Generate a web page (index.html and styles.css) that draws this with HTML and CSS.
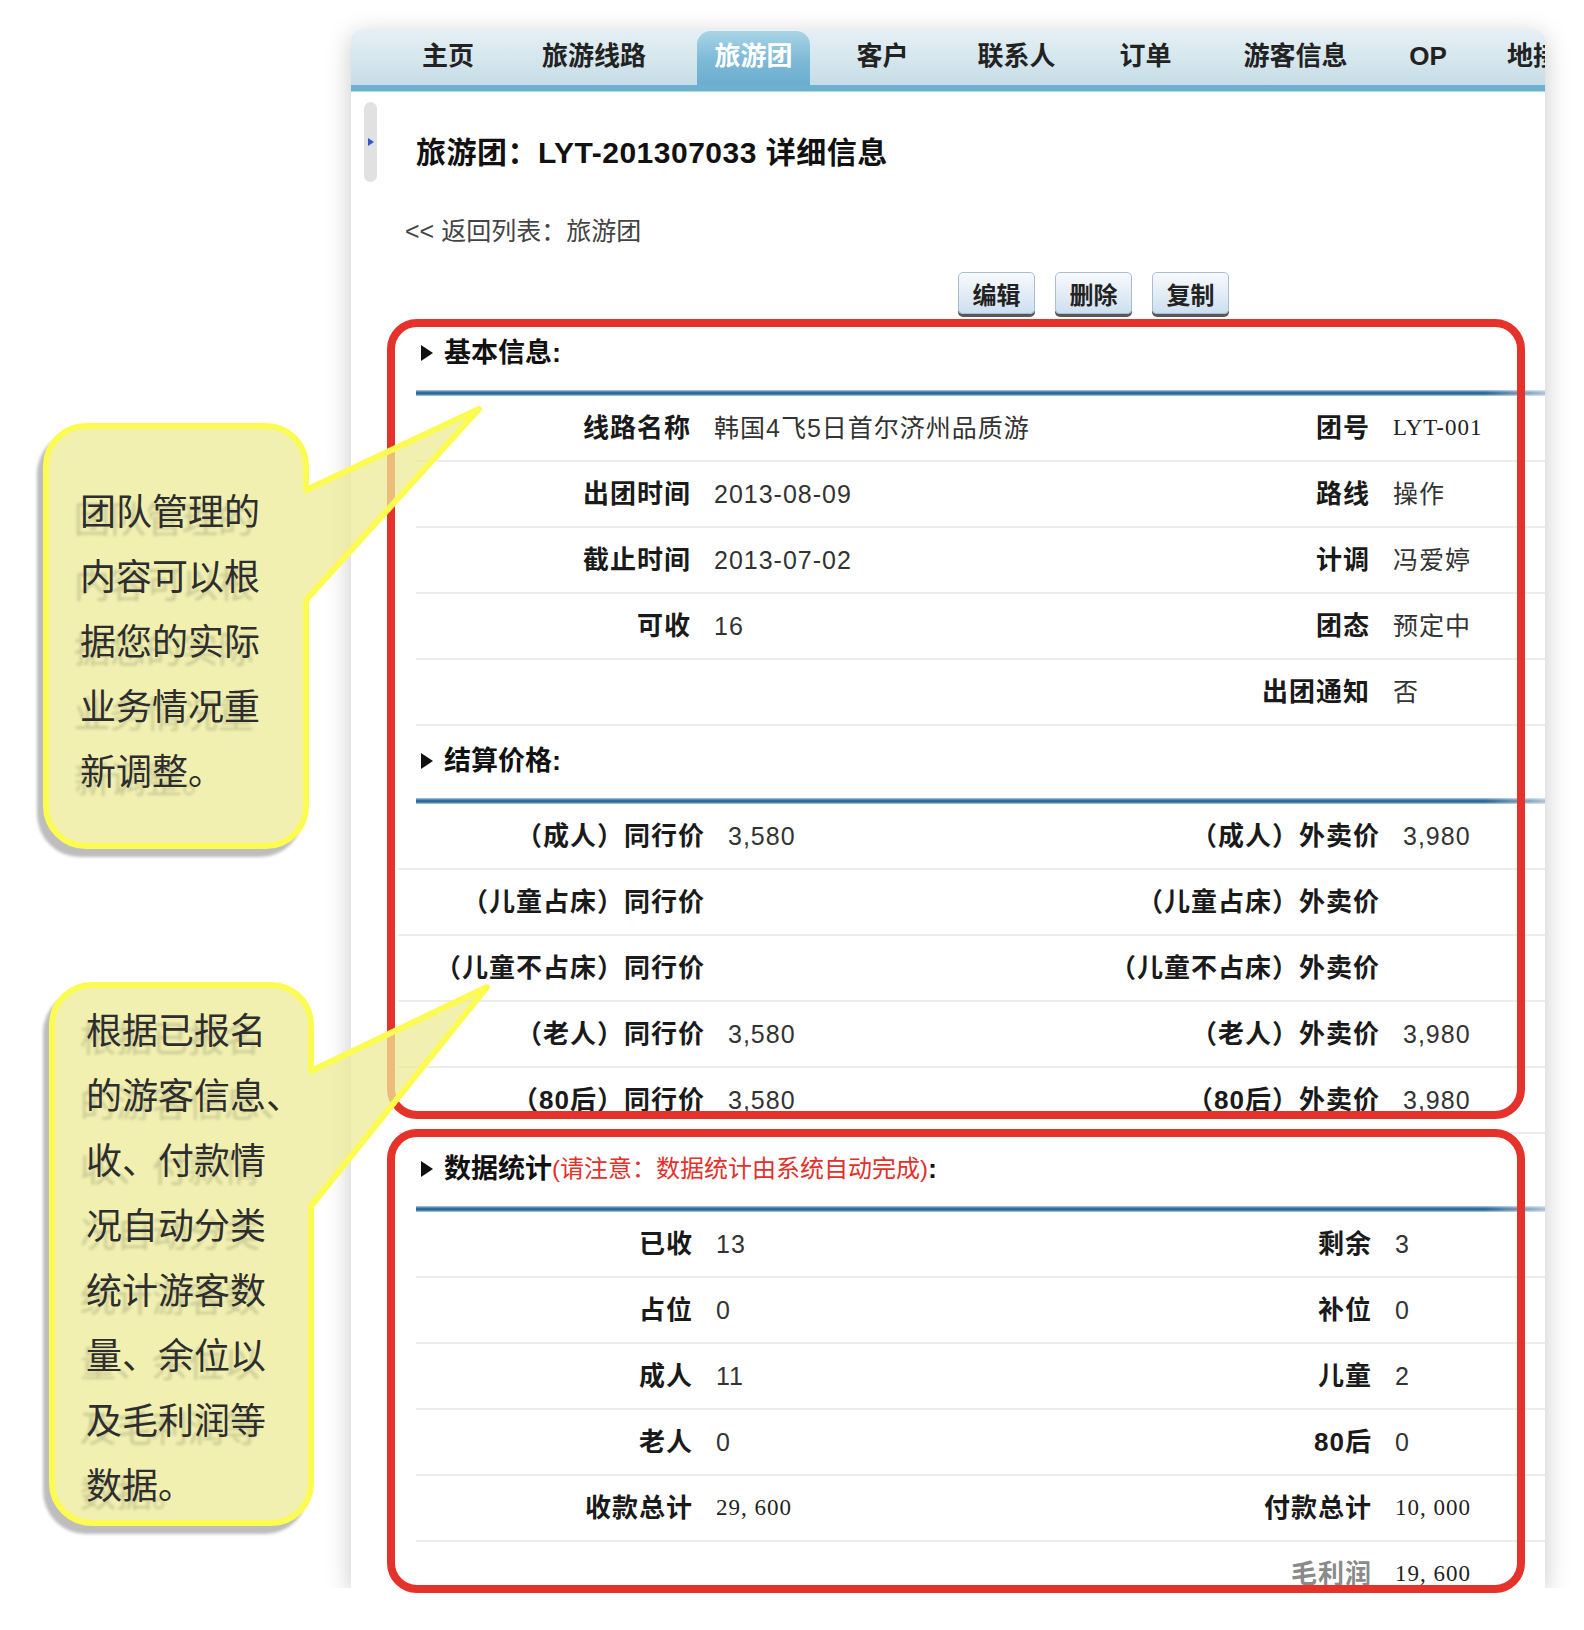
FILE: index.html
```html
<!DOCTYPE html>
<html lang="zh-CN">
<head>
    <meta charset="utf-8">
    <title>旅游团：LYT-201307033 详细信息</title>
    <link rel="stylesheet" href="styles.css">
</head>
<body>
    <div class="shot">
        <ul class="nav">
            <li>主页</li>
            <li>旅游线路</li>
            <li class="on">旅游团</li>
            <li>客户</li>
            <li>联系人</li>
            <li>订单</li>
            <li>游客信息</li>
            <li>OP</li>
            <li>地接</li>
        </ul>

        <div class="layout">
            <div class="handle"><i></i></div>

            <div class="content">
                <h1>旅游团：LYT-201307033 详细信息</h1>
                <a class="back" href="#">&lt;&lt; 返回列表：旅游团</a>

                <div class="actions">
                    <button>编辑</button>
                    <button>删除</button>
                    <button>复制</button>
                </div>

                <!-- 基本信息 -->
                <section class="group basic">
                    <h2>基本信息:</h2>
                    <div class="rule"></div>
                    <div class="row"><span class="k">线路名称</span><span class="v">韩国4飞5日首尔济州品质游</span><span class="k">团号</span><span class="v mono">LYT-001</span></div>
                    <div class="row"><span class="k">出团时间</span><span class="v">2013-08-09</span><span class="k">路线</span><span class="v">操作</span></div>
                    <div class="row"><span class="k">截止时间</span><span class="v">2013-07-02</span><span class="k">计调</span><span class="v">冯爱婷</span></div>
                    <div class="row"><span class="k">可收</span><span class="v">16</span><span class="k">团态</span><span class="v">预定中</span></div>
                    <div class="row"><span class="k"></span><span class="v"></span><span class="k">出团通知</span><span class="v">否</span></div>
                </section>

                <!-- 结算价格 -->
                <section class="group price">
                    <h2>结算价格:</h2>
                    <div class="rule"></div>
                    <div class="row"><span class="k">（成人）同行价</span><span class="v">3,580</span><span class="k">（成人）外卖价</span><span class="v">3,980</span></div>
                    <div class="row"><span class="k">（儿童占床）同行价</span><span class="v"></span><span class="k">（儿童占床）外卖价</span><span class="v"></span></div>
                    <div class="row"><span class="k">（儿童不占床）同行价</span><span class="v"></span><span class="k">（儿童不占床）外卖价</span><span class="v"></span></div>
                    <div class="row"><span class="k">（老人）同行价</span><span class="v">3,580</span><span class="k">（老人）外卖价</span><span class="v">3,980</span></div>
                    <div class="row"><span class="k">（80后）同行价</span><span class="v">3,580</span><span class="k">（80后）外卖价</span><span class="v">3,980</span></div>
                </section>

                <!-- 数据统计 -->
                <section class="group stats">
                    <h2>数据统计<span class="note">(请注意：数据统计由系统自动完成)</span>:</h2>
                    <div class="rule"></div>
                    <div class="row"><span class="k">已收</span><span class="v">13</span><span class="k">剩余</span><span class="v">3</span></div>
                    <div class="row"><span class="k">占位</span><span class="v">0</span><span class="k">补位</span><span class="v">0</span></div>
                    <div class="row"><span class="k">成人</span><span class="v">11</span><span class="k">儿童</span><span class="v">2</span></div>
                    <div class="row"><span class="k">老人</span><span class="v">0</span><span class="k">80后</span><span class="v">0</span></div>
                    <div class="row"><span class="k">收款总计</span><span class="v mono">29, 600</span><span class="k">付款总计</span><span class="v mono">10, 000</span></div>
                    <div class="row"><span class="k"></span><span class="v"></span><span class="k faded">毛利润</span><span class="v mono">19, 600</span></div>
                </section>
            </div>
        </div>
    </div>

    <!-- red frames around the two blocks -->
    <div class="frame frame-top"></div>
    <div class="frame frame-bottom"></div>

    <!-- speech bubbles -->
    <svg class="bubbles" width="520" height="1600" viewBox="0 0 520 1600">
        <defs>
            <filter id="soft" x="-10%" y="-10%" width="120%" height="120%">
                <feGaussianBlur stdDeviation="1.5"/>
            </filter>
        </defs>
        <rect x="37" y="431" width="266" height="426" rx="43" fill="#bdbdbd" filter="url(#soft)"/>
        <rect x="46" y="426" width="260" height="420" rx="40" fill="#fff"/>
        <path class="bubble" d="M 86 426 H 266 A 40 40 0 0 1 306 466 V 490 L 479 409 L 306 600 V 806 A 40 40 0 0 1 266 846 H 86 A 40 40 0 0 1 46 806 V 466 A 40 40 0 0 1 86 426 Z"/>

        <rect x="43" y="990" width="265" height="544" rx="43" fill="#bdbdbd" filter="url(#soft)"/>
        <rect x="52" y="985" width="259" height="538" rx="40" fill="#fff"/>
        <path class="bubble" d="M 92 985 H 271 A 40 40 0 0 1 311 1025 V 1071 L 487 987 L 311 1206 V 1483 A 40 40 0 0 1 271 1523 H 92 A 40 40 0 0 1 52 1483 V 1025 A 40 40 0 0 1 92 985 Z"/>
    </svg>

    <div class="tip tip-top">团队管理的<br>内容可以根<br>据您的实际<br>业务情况重<br>新调整。</div>
    <div class="tip tip-bottom">根据已报名<br>的游客信息、<br>收、付款情<br>况自动分类<br>统计游客数<br>量、余位以<br>及毛利润等<br>数据。</div>
</body>
</html>
```

FILE: styles.css
```css
body {
    margin: 0;
    background: #fff;
    font-family: "Liberation Sans", "Noto Sans CJK SC", sans-serif;
    color: #222;
}

/* the screen itself */
.shot {
    width: 1194px;
    height: 1559px;
    margin: 29px 0 0 351px;
    background: #fff;
    overflow: hidden;
    border-radius: 12px 12px 0 0;
    box-shadow: 0 6px 26px rgba(0, 0, 0, 0.22);
}

/* top menu */
.nav {
    display: grid;
    grid-template-columns: 146px 146px 143px 145px 123px 135px 165px 100px 110px;
    height: 56px;
    margin: 0;
    padding: 0 0 0 24px;
    list-style: none;
    background: linear-gradient(#e6f0f5, #d0e3eb 70%, #c6dce7);
    border-bottom: 6px solid #6eb0cf;
    box-shadow: 0 1px 0 #b2d5e4;
}

.nav li {
    text-align: center;
    line-height: 54px;
    font-size: 26px;
    font-weight: bold;
    color: #222;
    white-space: nowrap;
}

.nav li.on {
    margin: 2px 0 0 30px;
    line-height: 50px;
    color: #fff;
    background: linear-gradient(#a9d4e5, #7db9d6 55%, #6badcf);
    border-radius: 14px 14px 0 0;
}

.layout {
    display: flex;
    align-items: flex-start;
}

/* collapse handle on the left edge */
.handle {
    display: flex;
    align-items: center;
    flex: none;
    width: 13px;
    height: 80px;
    margin: 11px 0 0 13px;
    background: #e1e1e1;
    border-radius: 7px;
}

.handle i {
    width: 0;
    height: 0;
    margin-left: 4px;
    border-left: 6px solid #2f58cc;
    border-top: 4px solid transparent;
    border-bottom: 4px solid transparent;
}

.content {
    flex: 1;
    margin-left: 21px;
}

h1 {
    margin: 42px 0 0 18px;
    font-size: 30px;
    line-height: 40px;
    font-weight: bold;
    color: #111;
    letter-spacing: 0.5px;
}

.back {
    display: block;
    margin: 43px 0 0 7px;
    font-size: 25px;
    line-height: 30px;
    color: #444;
    text-decoration: none;
}

.actions {
    display: flex;
    gap: 20px;
    height: 42px;
    margin: 26px 0 0 560px;
    padding-bottom: 3px;
}

.actions button {
    width: 77px;
    height: 42px;
    padding: 0;
    border: 1px solid #aabdd0;
    border-radius: 5px;
    background: linear-gradient(#f7fafd, #e3edf6 50%, #cddff0);
    box-shadow: 0 3px 0 #585858;
    font-family: "Noto Sans CJK SC", sans-serif;
    font-size: 24px;
    font-weight: bold;
    color: #222;
}

/* detail blocks */
.group h2 {
    display: flex;
    align-items: center;
    margin: 0;
    padding: 15px 0 17px 23px;
    font-size: 27px;
    line-height: 40px;
    font-weight: bold;
    color: #111;
}

.group.basic h2 {
    padding-top: 16px;
}

.group h2::before {
    content: '';
    width: 0;
    height: 0;
    margin-right: 11px;
    border-left: 12px solid #111;
    border-top: 8px solid transparent;
    border-bottom: 8px solid transparent;
}

.group h2 .note {
    font-size: 24px;
    font-weight: normal;
    color: #e42f2a;
}

.rule {
    height: 6px;
    margin-left: 18px;
    background:
        linear-gradient(to right, rgba(255, 255, 255, 0) calc(100% - 60px), rgba(255, 255, 255, 0.6)),
        linear-gradient(#bad3e4, #3572a2 35%, #2b6291 65%, #bad3e4);
}

.row {
    display: grid;
    grid-template-columns: var(--k1) var(--v1) var(--k2) 1fr;
    height: 64px;
    line-height: 64px;
    border-bottom: 2px solid #ececec;
    white-space: nowrap;
}

.basic .row,
.stats .row {
    margin-left: 18px;
}

.basic { --k1: 275px; --v1: 530px; --k2: 149px; }
.price { --k1: 307px; --v1: 375px; --k2: 300px; }
.stats { --k1: 277px; --v1: 530px; --k2: 149px; }

.row .k {
    text-align: right;
    font-size: 26px;
    font-weight: bold;
    letter-spacing: 1px;
    color: #1a1a1a;
}

.row .k.faded {
    color: #8a8a8a;
}

.row .v {
    padding-left: 23px;
    font-size: 25px;
    letter-spacing: 1px;
    color: #333;
}

/* codes and money sums come out in the old serif face */
.row .v.mono {
    font-family: "Liberation Serif", serif;
    font-size: 23px;
    letter-spacing: 1px;
    color: #222;
}

/* red marker frames */
.frame {
    position: absolute;
    left: 387px;
    width: 1138px;
    box-sizing: border-box;
    border: 8px solid #e5322a;
    border-radius: 30px;
}

.frame-top {
    top: 319px;
    height: 800px;
}

.frame-bottom {
    top: 1129px;
    height: 464px;
}

/* bubbles */
.bubbles {
    position: absolute;
    left: 0;
    top: 0;
}

.bubble {
    fill: rgba(236, 235, 150, 0.75);
    stroke: #fbfb52;
    stroke-width: 6;
    stroke-linejoin: round;
}

.tip {
    position: absolute;
    font-family: "Noto Sans CJK SC", sans-serif;
    font-size: 36px;
    line-height: 65px;
    color: #2e2e2e;
    white-space: nowrap;
    text-shadow: -6px 8px 3px rgba(0, 0, 0, 0.16);
}

.tip-top {
    left: 80px;
    top: 477px;
}

.tip-bottom {
    left: 86px;
    top: 996px;
}
```
